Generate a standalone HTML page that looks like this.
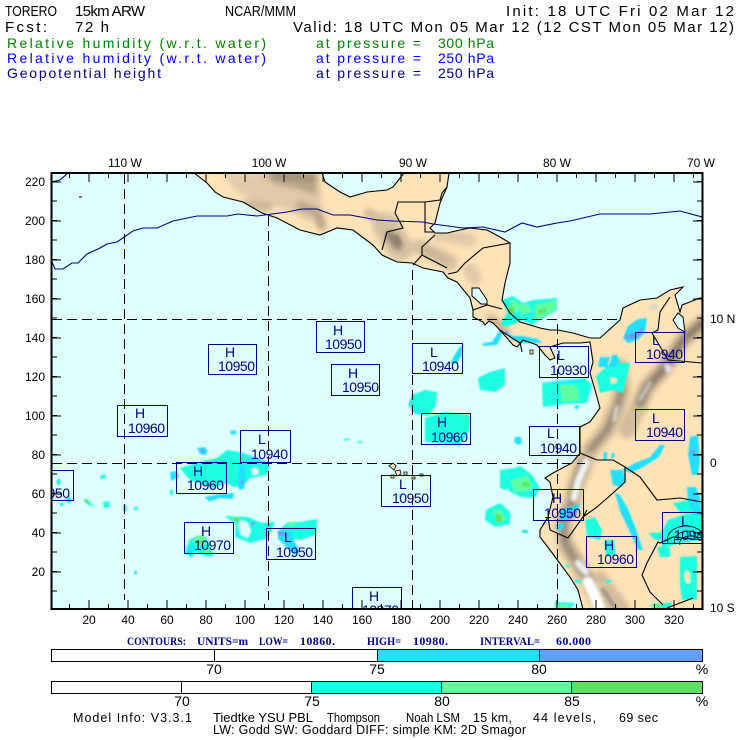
<!DOCTYPE html>
<html><head><meta charset="utf-8"><style>
html,body{margin:0;padding:0;background:#fff}
svg{display:block}
text{font-family:"Liberation Sans",sans-serif}
.h{font-size:15px;fill:#000}
.s{font-size:14px}
.b text{font-size:14px;fill:#000080}
.t text{font-size:12px;fill:#000;text-anchor:end}
.c text{font-size:12px;fill:#000;text-anchor:middle}
.k text{font-size:14px;fill:#000;text-anchor:middle}
.n text{font-family:"Liberation Serif",serif;font-weight:bold;font-size:12px;fill:#00008b}
.m text{font-size:12.5px;fill:#000}
</style></head><body>
<svg width="740" height="740" viewBox="0 0 740 740" xmlns="http://www.w3.org/2000/svg">
<defs>
<clipPath id="plot"><rect x="52" y="173" width="650" height="436"/></clipPath>
<clipPath id="land"><path id="lp" d="M194 173L207 183 215 192 223 197 243 202 262 213 277 218 300 230 320 235 337 228 353 230 373 245 382 255 397 262 412 263 423 268 443 272 448 278 457 282 470 298 473 310 473 317 483 322 485 325 489 321 493 323 497 327 507 338 513 345 517 347 523 340 537 345 545 355 550 360 555 358 550 347 563 343 580 343 590 342 593 362 590 373 595 390 600 408 590 422 580 427 580 453 572 463 553 473 545 478 550 482 553 497 548 517 540 530 540 537 550 550 570 577 578 590 583 609 702 609 702 298 700 298 682 305 680 312 675 295 683 287 670 290 657 298 640 300 623 308 620 320 600 338 590 338 573 333 558 330 550 330 540 328 520 322 510 313 502 300 505 283 510 263 510 243 500 237 487 230 470 228 460 230 447 233 435 233 430 228 435 223 440 203 447 187 449 173 404 173 393 187 387 190 367 192 350 197 340 192 325 182 322 173Z"/></clipPath>
<filter id="bl" x="-30%" y="-30%" width="160%" height="160%"><feGaussianBlur stdDeviation="3"/></filter>
<filter id="bl2" x="-30%" y="-30%" width="160%" height="160%"><feGaussianBlur stdDeviation="1.5"/></filter>
<filter id="bl3" x="-5%" y="-5%" width="110%" height="110%"><feGaussianBlur stdDeviation=".8"/></filter>
</defs>

<!-- header -->
<text class="h" x="5" y="16" textLength="52" lengthAdjust="spacingAndGlyphs">TORERO</text>
<text class="h" x="75" y="16" textLength="70">15km ARW</text>
<text class="h" x="225" y="16" textLength="71" lengthAdjust="spacingAndGlyphs">NCAR/MMM</text>
<text class="h" x="506" y="16" textLength="228">Init: 18 UTC Fri 02 Mar 12</text>
<text class="h" x="5" y="32" textLength="42">Fcst:</text>
<text class="h" x="75" y="32" textLength="34">72 h</text>
<text class="h" x="293" y="32" textLength="441">Valid: 18 UTC Mon 05 Mar 12 (12 CST Mon 05 Mar 12)</text>
<g class="s" fill="#008000"><text x="7" y="48" textLength="259">Relative humidity (w.r.t. water)</text><text x="316" y="48" textLength="105">at pressure =</text><text x="438" y="48" textLength="56">300 hPa</text></g>
<g class="s" fill="#0000ff"><text x="7" y="63" textLength="259">Relative humidity (w.r.t. water)</text><text x="316" y="63" textLength="105">at pressure =</text><text x="438" y="63" textLength="56">250 hPa</text></g>
<g class="s" fill="#000080"><text x="7" y="78" textLength="154">Geopotential height</text><text x="316" y="78" textLength="105">at pressure =</text><text x="438" y="78" textLength="56">250 hPa</text></g>

<!-- map -->
<g clip-path="url(#plot)">
<rect x="52" y="173" width="650" height="436" fill="#dfffff"/>
<use href="#lp" fill="#fde4b8"/>

<!-- terrain -->
<g clip-path="url(#land)">
<g filter="url(#bl)" fill="none" stroke-linecap="round" stroke-linejoin="round">
<path fill="#e0cba8" stroke="none" d="M222 173H318L322 195 322 225 305 220 285 208 255 203 235 190Z"/>
<path fill="#b7a586" stroke="none" d="M262 173H318L316 195 300 190 275 184Z"/>
<path stroke="#a08d72" stroke-width="8" d="M275 175L312 177"/>
<path stroke="#b7a586" stroke-width="9" d="M300 205L318 213 322 226"/>
<path stroke="#c9b594" stroke-width="9" d="M245 205L268 207"/>
<path stroke="#cdb794" stroke-width="9" d="M368 213L385 222"/>
<path stroke="#d5c2a2" stroke-width="26" d="M385 225L400 248"/>
<path stroke="#8c7b68" stroke-width="9" d="M390 235L398 246"/>
<path stroke="#d5c2a2" stroke-width="16" d="M420 247L450 262"/>
<path stroke="#c7b291" stroke-width="6" d="M425 250L445 260"/>
<path stroke="#e0cba8" stroke-width="14" d="M440 235L470 240M470 270L475 278"/>
<path stroke="#c9ad8d" stroke-width="8" d="M490 318L505 330"/>
<path stroke="#d2bc99" stroke-width="17" d="M580 477L590 450 607 430 617 407 622 390 620 367"/>
<path stroke="#8f8070" stroke-width="6" d="M590 450L607 430 617 407 622 390"/>
<path stroke="#d2bc99" stroke-width="17" d="M627 430L640 403 647 387 663 370 683 340 702 323"/>
<path stroke="#867665" stroke-width="8" d="M640 403L647 387 663 370 683 340 702 323"/>
<path stroke="#d2bc99" stroke-width="17" d="M583 463L575 487 572 503 563 523 565 543 577 563 587 580 603 609"/>
<path stroke="#978878" stroke-width="8" d="M583 463L575 487 572 503 563 523 565 543 577 563 590 580"/>
<path stroke="#d2bc99" stroke-width="10" d="M600 575L625 609"/>
</g>
<g filter="url(#bl2)" fill="none" stroke-linecap="round">
<path stroke="#8e7e6c" stroke-width="5" d="M396 237l3 6"/>
<path stroke="#f4f4f4" stroke-width="7" d="M586 462L578 482 574 498"/>
<path stroke="#e4e4e4" stroke-width="3" d="M614 420L617 407"/>
<path stroke="#e8e8e8" stroke-width="6" d="M667 366L669 370"/>
<path stroke="#d8d8d8" stroke-width="3" d="M640 400L650 383"/>
<path stroke="#efefef" stroke-width="7" d="M578 563L586 572"/>
<path stroke="#fff" stroke-width="11" d="M588 582L594 594 600 609"/>
<path stroke="#a19383" stroke-width="5" d="M603 590L616 609"/>
<path stroke="#d6d0c4" stroke-width="5" d="M652 307l3 0"/>
</g>
</g>

<!-- rain: RH300 -->
<g filter="url(#bl3)">
<g fill="#1cffe0">
<path d="M180 468L200 462 217 458 227 450 240 452 263 460 270 465 267 475 250 478 243 487 233 487 227 483 213 488 190 480Z"/>
<path d="M225 516L248 517 262 523 275 522 268 538 250 543 235 537 236 525Z"/>
<path d="M279 530L288 522 300 522 317 519 317 528 315 535 300 540 280 537Z"/>
<path d="M189 540L195 537 205 536 212 548 213 557 205 556 195 552 192 558 185 553Z"/>
<path d="M502 300L513 296 523 303 533 300 557 298 557 310 540 320 532 325 523 320 507 327 500 325 507 313Z"/>
<path d="M542 383L565 380 585 378 592 385 587 403 565 404 543 407Z"/>
<path d="M596 376L610 363 630 363 623 393 613 390 600 393Z"/>
<path d="M412 395L425 390 437 392 436 405 428 416 415 414 408 405Z"/>
<path d="M425 418L445 412 470 415 470 430 460 445 425 442Z"/>
<path d="M478 378L490 372 505 368 505 385 495 392 480 390Z"/>
<path d="M505 472L520 466 532 475 540 488 535 498 520 497 508 490Z"/>
<path d="M500 470L515 468 520 478 505 490 500 488Z"/>
<path d="M486 510L500 503 510 512 510 524 495 527 485 520Z"/>
<path d="M673 503L690 500 700 505 700 512 680 513Z"/>
<path d="M668 520L685 514 702 512 702 540 680 543 662 548 660 535Z"/>
<path d="M648 533L672 532 672 540 655 540Z"/>
<path d="M657 547L670 547 670 557 660 557Z"/>
<path d="M680 557L697 556 697 600 682 600 680 585Z"/>
<path d="M585 520L595 517 602 530 600 540 587 537Z"/>
<path d="M604 540L614 540 616 555 606 556Z"/>
<path d="M649 606L672 602 670 609 655 609Z"/>
<path d="M555 602L575 603 570 609 555 609Z"/>
<path d="M170 490h3v5h-3zM56 481l3-3 2 5-3 3zM65 499l4-3 3 4-3 4zM60 503l5 0-2 3-3 0z"/>
<path d="M100 476l5-2 1 4-6 1zM103 502l6-1 1 6-6 1zM123 505l3 0 1 6-4 0zM134 507l4 0 0 3-4 0z"/>
<path d="M85 499l4 1 2 4 5 2-6 0-4-3z"/>
<path d="M344 439l5-1 0 2-5 1zM358 441l4 0 0 2-4 0zM398 495l4 0 0 2-4 0z"/>
<path d="M565 565l5 0 0 2-5 0zM575 580l6 0 0 3-6 0zM606 580l5 0 0 3-5 0z"/>
</g>
<path fill="#dfffff" d="M254 467l4 2 1 5-6 1-2-5zM239 476l3 0 1 9-4 0zM241 520l7 3 3 8-3 7-7-3-3-10z"/>
<path fill="#fde4b8" d="M686 570l4 3 0 10-4 0-2-7zM610 378l6 0 1 4-6 2z"/>
<g fill="#60ffa0">
<path d="M197 535l7 1 3 8-8 2-6-4zM203 547l6 2 2 5-6 0zM232 517l8 0-2 4-5 0z"/>
<path d="M560 385L576 385 580 400 562 402Z"/>
<path d="M535 305L557 300 555 310 535 322ZM511 300l7 2 2 8-8 4-3-6zM288 523l8-2 0 4-8 1z"/>
<path d="M510 480l18-4 5 14-18 2zM492 510l9 0 5 10-9 3zM520 304l8 0 3 8-10 3z"/>
<path d="M652 603l12 0-3 5-9 0zM555 605l15 0-3 4-12 0z"/>
</g>
<g fill="#60e060">
<path d="M508 307l6 0 1 6-6 1zM538 310l8-2 0 4-8 2zM234 518l6 0-1 3-5 0zM198 540l5 0 0 4-5 0z"/>
<path d="M495 513l6 2 1 7-6 0zM522 482l7 0 1 4-7 1z"/>
<path d="M84 499l4 1 1 3-4 0z"/>
</g>

<!-- rain: RH250 -->
<g fill="#20e0ff">
<path d="M170 472l7-1 2 6-8 4zM197 448l8-1 3 5-3 3-5-1zM205 497l15-3 14-1-1 6-14-1-10 4zM230 431l6-1 0 4-5 1zM240 465l4 0 2 15-2 9-5 1-1-8z"/>
<path d="M278 531l14 0 2 10 6 10-5 4-7-7-10-9zM258 535l3 0 0 2-3 0z"/>
<path d="M186 547l8-2 1 6-7 3zM134 571l3 0 0 3-3 0z"/>
<path d="M623 338l5-12 10-7 9-1-2 14-7 8-10 3z"/>
<path d="M483 343l9-1 8-12 2 5-5 10-14 1zM505 330l8 6 10 0 15 3 4 4-18 0-12-3z"/>
<path d="M450 364l4-8 5-8 4-3-1 10-5 8zM612 355l5 0 3 6-5 6-6 2z"/>
<path d="M622 470l13-7 15-6 10-12 5 0-6 12-14 9-14 7zM610 470l13 0 3 10-5 7-8-2z"/>
<path d="M615 493l5 2 8 14 8 20 7 21-5 0-9-20-9-19z"/>
<path d="M690 437l8-2 2 25-2 15-6 0-4-20zM687 487l9 0 4 10 2 18-8 0-6-13z"/>
<path d="M515 437l6 0 1 6-4 2-4-3zM522 530l6 0 0 3-6 0z"/>
<path d="M560 510l20-6-5 12-10 5-5-3zM556 525l8-2 0 5-7 3z"/>
<path d="M600 357l10 0-3 10-9 0zM575 405l5 1-2 3-3 0zM604 452l3 0 0 8-4 0zM612 453l3 0-1 5-3 0z"/>
</g>
<g fill="#60a0ff">
<path d="M200 449l5 1 1 3-5 0zM240 481l4-1 0 3-4 1zM251 522l4 0 0 3-4 1zM277 531l8 0 2 4-8 1zM625 335l12-3 7-6-2 6-7 7-10 0zM505 331l3 0 0 3-3 0zM690 450l5-1 0 5-5 0zM578 508l-12 7 2 4 8-3z"/>
</g>
</g>

<!-- borders & lakes -->
<path d="M472 288l7 0 8 12 0 4-6 0-9-8zM678 313l5 4 2 15-7-4-5-8z" fill="#dfffff" stroke="#000" stroke-width="1"/>
<g fill="none" stroke="#000" stroke-width="1.1">
<use href="#lp"/>
<path d="M382 250L387 232 403 228 395 213 398 202 425 202 425 232 435 232M425 202L440 200 442 193 447 187M413 265L422 255 422 247 435 235M422 255L447 268M448 274L457 272 465 263 483 248 510 243M473 310L487 305 502 309M500 330L512 338 520 343M520 342L522 352"/>
<path d="M670 297L660 312 658 330 652 333 658 343 668 360 702 363M580 453L597 460 613 460 625 467 640 477 657 500 680 498 702 502M625 467L625 482 613 493 597 507 583 517M550 530L568 538 583 517 587 510M548 517L550 530M702 540L673 537 660 543 658 542 647 563 642 575 650 592 663 605M667 608L693 598"/>
</g>
<g fill="#fde4b8" stroke="#000" stroke-width=".8">
<path d="M389 466l4-3 3 3-2 4zM395 471l5-1 1 4-4 2zM404 472l3 0 0 3-3 0zM412 477l3 0 0 2-3 0zM420 474l3 0 0 2-3 0zM391 475l3 0 0 3-3 0z"/>
<path d="M530 350l3 0 0 4-3 0z"/>
</g>
<path d="M79 197h3" stroke="#000" stroke-width="1"/>

<!-- contour -->
<g fill="none" stroke="#000080" stroke-width="1.1">
<path d="M52 262L55 269 63 269 72 263 78 263 87 254 100 248 107 244 117 242 133 231 143 228 157 228 173 221 197 216 227 216 238 214 257 216 287 212 302 209 317 209 333 215 350 215 377 220 393 221 423 222 433 224 463 228 483 227 505 232 522 223 537 227 557 223 570 221 600 214 650 214 680 211 702 217"/>
<path d="M52 182L60 180 68 173"/>
<path d="M668 543a18 13 0 0 1 36 -7M675 544a13 9 0 0 1 27 -6M680 545a9 6 0 0 1 20 -4" stroke="#000" stroke-width=".8"/>
</g>

<!-- grid -->
<g stroke="#000" stroke-width="1" stroke-dasharray="10 5" fill="none" shape-rendering="crispEdges">
<path d="M124.5 174V600M268.5 216V600M412.5 270V609M557.5 324V609"/>
<path d="M52 319.5H620M52 463.5H585"/>
</g>

<!-- H/L boxes -->
<g class="b" fill="none" stroke="#000080" stroke-width="1" shape-rendering="crispEdges">
<rect x="316.5" y="321.5" width="48" height="31"/><rect x="208.5" y="344.5" width="48" height="30"/><rect x="412.5" y="343.5" width="50" height="30"/><rect x="331.5" y="364.5" width="48" height="31"/><rect x="539.5" y="346.5" width="49" height="31"/><rect x="635.5" y="332.5" width="49" height="30"/><rect x="635.5" y="409.5" width="49" height="31"/><rect x="529.5" y="426.5" width="50" height="29"/><rect x="533.5" y="489.5" width="50" height="31"/><rect x="381.5" y="475.5" width="49" height="31"/><rect x="421.5" y="413.5" width="49" height="31"/><rect x="662.5" y="512.5" width="50" height="31"/><rect x="586.5" y="536.5" width="50" height="31"/><rect x="117.5" y="405.5" width="50" height="31"/><rect x="240.5" y="430.5" width="50" height="32"/><rect x="176.5" y="462.5" width="50" height="31"/><rect x="22.5" y="470.5" width="51" height="30"/><rect x="184.5" y="522.5" width="49" height="31"/><rect x="266.5" y="528.5" width="49" height="31"/><rect x="352.5" y="587.5" width="49" height="31"/>
</g>
<g class="b" stroke="none">
<text x="333" y="335">H</text><text x="325" y="349" textLength="37">10950</text>
<text x="225" y="357">H</text><text x="218" y="371" textLength="37">10950</text>
<text x="430" y="357">L</text><text x="422" y="371" textLength="37">10940</text>
<text x="348" y="378">H</text><text x="342" y="392" textLength="37">10950</text>
<text x="557" y="360">L</text><text x="550" y="375" textLength="37">10930</text>
<text x="652" y="345">L</text><text x="646" y="359" textLength="37">10940</text>
<text x="652" y="423">L</text><text x="646" y="437" textLength="37">10940</text>
<text x="547" y="438">L</text><text x="540" y="453" textLength="37">10940</text>
<text x="552" y="503">H</text><text x="544" y="518" textLength="37">10950</text>
<text x="399" y="489">L</text><text x="392" y="503" textLength="37">10950</text>
<text x="437" y="427">H</text><text x="431" y="442" textLength="37">10960</text>
<text x="681" y="526">L</text><text x="674" y="540" textLength="37">10940</text>
<text x="604" y="550">H</text><text x="597" y="564" textLength="37">10960</text>
<text x="135" y="418">H</text><text x="128" y="433" textLength="37">10960</text>
<text x="258" y="444">L</text><text x="251" y="459" textLength="37">10940</text>
<text x="193" y="476">H</text><text x="187" y="490" textLength="37">10960</text>
<text x="34" y="483">H</text><text x="33" y="498" textLength="37">10950</text>
<text x="201" y="536">H</text><text x="194" y="550" textLength="37">10970</text>
<text x="284" y="542">L</text><text x="276" y="557" textLength="37">10950</text>
<text x="369" y="601">H</text><text x="362" y="615" textLength="37">10970</text>
</g>
</g>

<!-- ticks -->
<g stroke="#000" fill="none" shape-rendering="crispEdges">
<path d="M69 606.5H702M69 175.5H702" stroke-width="5" stroke-dasharray="1 18.5"/>
<path d="M88.5 604.5H702M88.5 177.5H702" stroke-width="9" stroke-dasharray="1 38"/>
<path d="M54.5 591.5V173M699.5 591.5V173" stroke-width="5" stroke-dasharray="1 18.5"/>
<path d="M56.5 572.5V173M697.5 572.5V173" stroke-width="9" stroke-dasharray="1 38"/>
<rect x="51.5" y="173" width="651" height="436" stroke-width="1.6"/>
</g>

<!-- axes -->
<g class="t">
<text x="45" y="186">220</text><text x="45" y="225">200</text><text x="45" y="264">180</text><text x="45" y="303">160</text><text x="45" y="342">140</text><text x="45" y="381">120</text><text x="45" y="420">100</text><text x="45" y="459">80</text><text x="45" y="498">60</text><text x="45" y="537">40</text><text x="45" y="576">20</text>
</g>
<g class="c">
<text x="89" y="624">20</text><text x="128" y="624">40</text><text x="167" y="624">60</text><text x="206" y="624">80</text><text x="245" y="624">100</text><text x="284" y="624">120</text><text x="323" y="624">140</text><text x="362" y="624">160</text><text x="401" y="624">180</text><text x="440" y="624">200</text><text x="479" y="624">220</text><text x="518" y="624">240</text><text x="557" y="624">260</text><text x="596" y="624">280</text><text x="635" y="624">300</text><text x="674" y="624">320</text>
<text x="125" y="167">110 W</text><text x="269" y="167">100 W</text><text x="413" y="167">90 W</text><text x="557" y="167">80 W</text><text x="701" y="167">70 W</text>
</g>
<g>
<text x="710" y="323" font-size="12">10 N</text><text x="710" y="467" font-size="12">0</text><text x="710" y="612" font-size="12">10 S</text>
</g>

<!-- contours line -->
<g class="n">
<text x="127" y="645" textLength="59" lengthAdjust="spacingAndGlyphs">CONTOURS:</text><text x="197" y="645" textLength="51" lengthAdjust="spacingAndGlyphs">UNITS=m</text><text x="259" y="645" textLength="29" lengthAdjust="spacingAndGlyphs">LOW=</text><text x="300" y="645" textLength="35">10860.</text><text x="367" y="645" textLength="34" lengthAdjust="spacingAndGlyphs">HIGH=</text><text x="413" y="645" textLength="35">10980.</text><text x="480" y="645" textLength="60" lengthAdjust="spacingAndGlyphs">INTERVAL=</text><text x="556" y="645" textLength="35">60.000</text>
</g>

<!-- colour bars -->
<g stroke="#000" stroke-width="1.2" shape-rendering="crispEdges">
<rect x="51.5" y="649.5" width="163" height="12" fill="#fff"/><rect x="214.5" y="649.5" width="163" height="12" fill="#fff"/><rect x="377.5" y="649.5" width="162" height="12" fill="#20e0ff"/><rect x="539.5" y="649.5" width="163" height="12" fill="#60a0ff"/>
<rect x="51.5" y="681.5" width="130" height="12" fill="#fff"/><rect x="181.5" y="681.5" width="130" height="12" fill="#fff"/><rect x="311.5" y="681.5" width="130" height="12" fill="#1cffe0"/><rect x="441.5" y="681.5" width="130" height="12" fill="#60ffa0"/><rect x="571.5" y="681.5" width="131" height="12" fill="#60e060"/>
</g>
<g class="k">
<text x="214" y="674">70</text><text x="377" y="674">75</text><text x="539" y="674">80</text><text x="702" y="674">%</text>
<text x="182" y="706">70</text><text x="312" y="706">75</text><text x="442" y="706">80</text><text x="572" y="706">85</text><text x="702" y="706">%</text>
</g>

<!-- footer -->
<g class="m">
<text x="73" y="722" textLength="119">Model Info: V3.3.1</text><text x="213" y="722" textLength="100" lengthAdjust="spacingAndGlyphs">Tiedtke YSU PBL</text><text x="327" y="722" textLength="53" lengthAdjust="spacingAndGlyphs">Thompson</text><text x="406" y="722" textLength="54" lengthAdjust="spacingAndGlyphs">Noah LSM</text><text x="473" y="722" textLength="39">15 km,</text><text x="533" y="722" textLength="63">44 levels,</text><text x="619" y="722" textLength="39">69 sec</text>
<text x="213" y="734" textLength="313">LW: Godd SW: Goddard DIFF: simple KM: 2D Smagor</text>
</g>
</svg>
</body></html>
